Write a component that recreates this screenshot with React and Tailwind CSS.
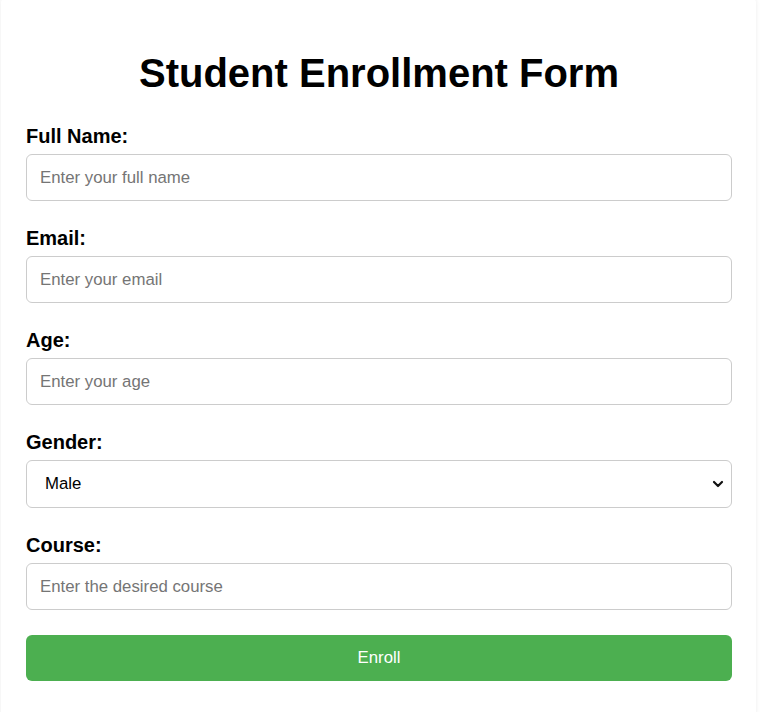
import { useState } from 'react';

const fields = [
  { id: 'name', label: 'Full Name:', placeholder: 'Enter your full name', type: 'text' },
  { id: 'email', label: 'Email:', placeholder: 'Enter your email', type: 'email' },
  { id: 'age', label: 'Age:', placeholder: 'Enter your age', type: 'number' },
];

const App = () => {
  const [gender, setGender] = useState('Male');

  return (
    <div className="bg-white min-h-screen" style={{ fontFamily: "'Liberation Sans', Arial, sans-serif" }}>
      <div className="w-[755px] ml-px -mt-[5px] bg-white rounded-lg shadow-[0_0_4px_rgba(0,0,0,0.08)] pl-[25px] pr-[24px] pt-[55px] pb-[40px]">
        <h1 className="text-[40px] leading-[46px] font-bold text-black text-center mb-[29px]">
          Student Enrollment Form
        </h1>

        <form onSubmit={(e) => e.preventDefault()}>
          {fields.map((f) => (
            <div key={f.id} className="mb-[26px]">
              <label htmlFor={f.id} className="block text-[20px] leading-[22px] font-bold text-black mb-[7px]">
                {f.label}
              </label>
              <input
                id={f.id}
                type={f.type}
                placeholder={f.placeholder}
                className="block w-full h-[47px] border border-[#cccccc] rounded-[6px] px-[13px] text-[16.8px] text-black placeholder:text-[#757575] outline-none"
              />
            </div>
          ))}

          <div className="mb-[26px]">
            <label htmlFor="gender" className="block text-[20px] leading-[22px] font-bold text-black mb-[7px]">
              Gender:
            </label>
            <div className="relative">
              <select
                id="gender"
                value={gender}
                onChange={(e) => setGender(e.target.value)}
                className="block w-full h-[48px] appearance-none border border-[#cccccc] rounded-[6px] pl-[18px] pr-[30px] text-[16.8px] text-black bg-white outline-none"
              >
                <option>Male</option>
                <option>Female</option>
                <option>Other</option>
              </select>
              <svg
                className="absolute right-[8px] top-1/2 -translate-y-1/2 pointer-events-none"
                width="12"
                height="12"
                viewBox="0 0 12 12"
                fill="none"
              >
                <path d="M2 4l4 4 4-4" stroke="#111" strokeWidth="2.2" strokeLinecap="round" strokeLinejoin="round" />
              </svg>
            </div>
          </div>

          <div className="mb-[25px]">
            <label htmlFor="course" className="block text-[20px] leading-[22px] font-bold text-black mb-[7px]">
              Course:
            </label>
            <input
              id="course"
              type="text"
              placeholder="Enter the desired course"
              className="block w-full h-[47px] border border-[#cccccc] rounded-[6px] px-[13px] text-[16.8px] text-black placeholder:text-[#757575] outline-none"
            />
          </div>

          <button
            type="submit"
            className="block w-full h-[46px] bg-[#4caf50] text-white text-[16.8px] rounded-[6px]"
          >
            Enroll
          </button>
        </form>
      </div>
    </div>
  );
};

export default App;
